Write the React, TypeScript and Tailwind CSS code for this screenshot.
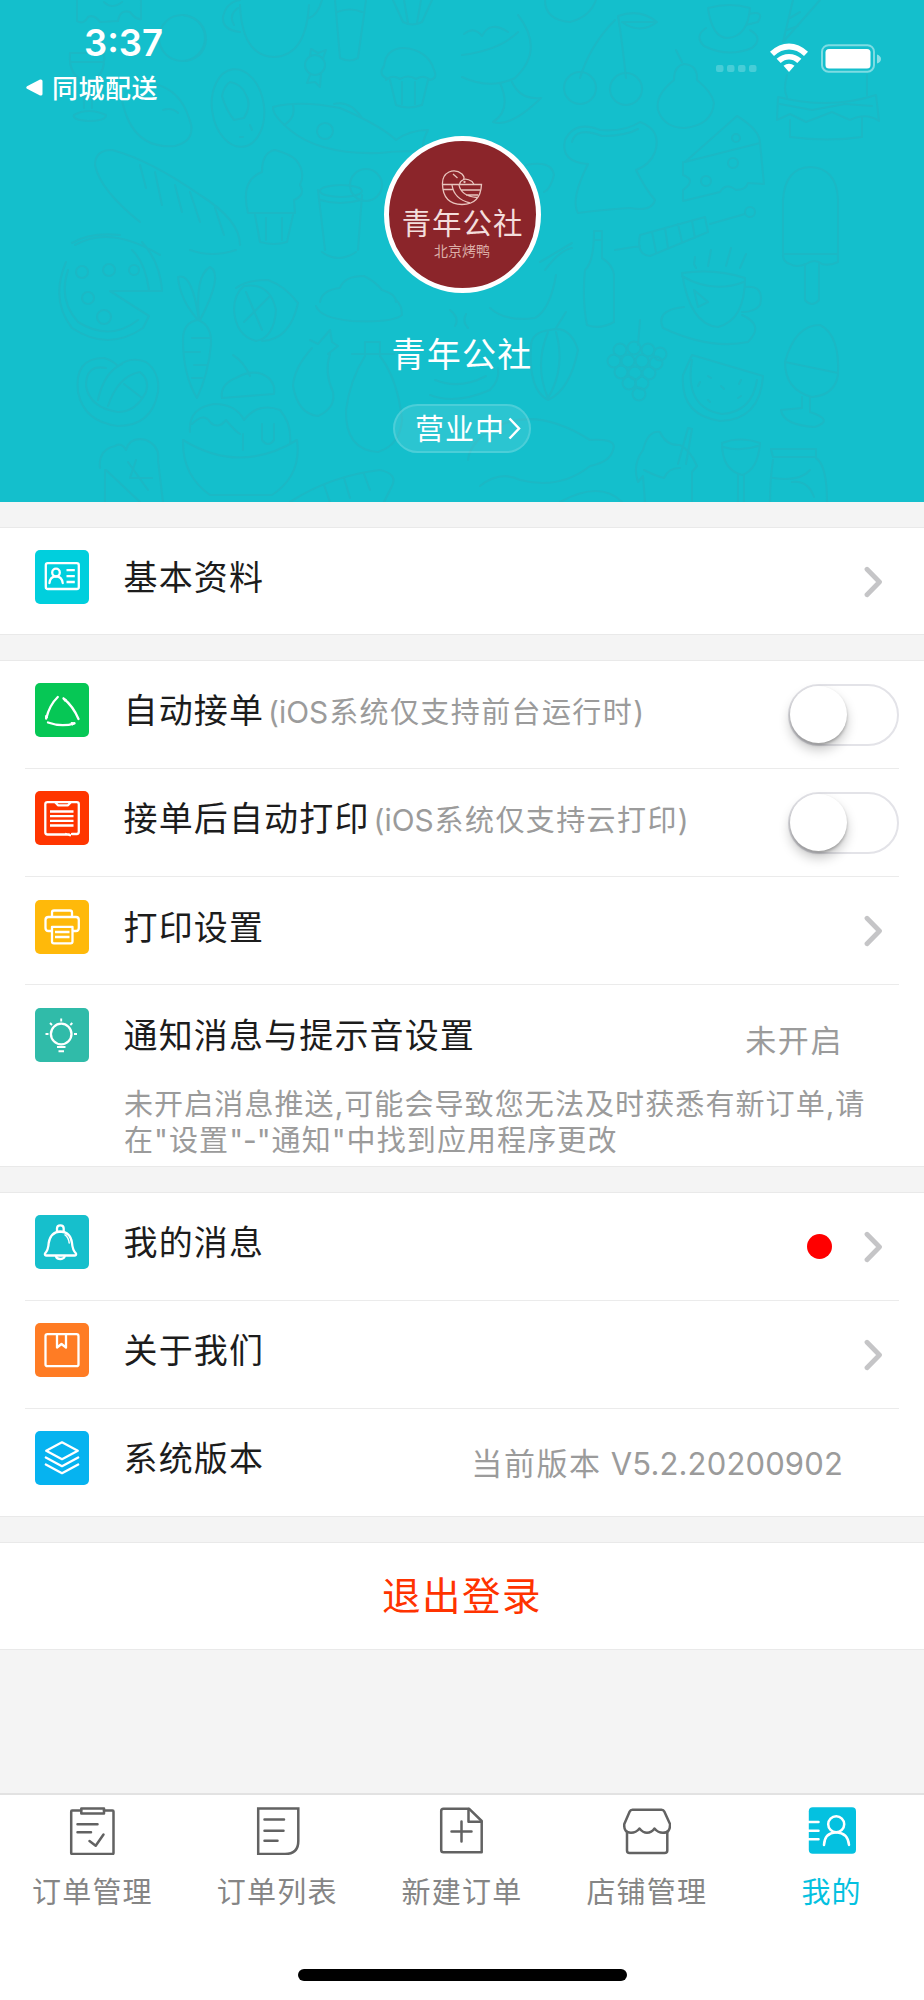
import React from 'react';
import { clsx } from 'clsx';

// Latin runs use Inter, slightly larger and without the CJK tracking
const Mixed: React.FC<{ text: string }> = ({ text }) => (
  <>
    {text.split(/([\x20-\x7e]+)/).map((part, i) =>
      i % 2 === 1 ? (
        <span key={i} className="mr-[.03em] font-['Inter',sans-serif] text-[1.03em] tracking-normal">{part}</span>
      ) : (
        part
      )
    )}
  </>
);

const Doodles = () => (
  <svg
    className="absolute inset-0"
    width="924"
    height="502"
    viewBox="0 0 924 502"
    fill="none"
    stroke="#1bb8c5"
    strokeWidth="2.1"
    strokeLinecap="round"
    strokeLinejoin="round"
  >
    {/* top left */}
    <path d="M77 0V21Q84 25 88 17Q94 14 100 22L118 21Q120 9 130 12Q136 20 141 19V0M104 2Q112 10 122 2" />
    <circle cx="182" cy="38" r="23" />
    <path d="M184 15Q206 20 206 40Q204 58 186 61" />
    <path d="M240 5Q242 56 274 57Q306 56 309 5M240 32Q222 30 223 17Q226 2 240 0M234 25Q228 15 238 8M309 18Q318 15 322 0" />
    <path d="M335 0L340 58Q350 63 358 58L366 0M337 12Q350 7 362 12" />
    <path d="M393 0L403 22Q412 27 422 22L432 0M404 0L408 23M421 0L417 23" />
    <path d="M70 53Q68 78 88 82Q106 78 104 53ZM71 62H103M84 82V108M92 82V108M74 115Q88 107 106 115Q106 121 88 121Q72 120 74 115" />
    <path d="M121 95Q130 150 175 146Q198 140 189 118Q180 90 155 84M163 110Q172 107 178 113" />
    <ellipse cx="238" cy="108" rx="26" ry="39" transform="rotate(-8 238 108)" />
    <path d="M230 82Q242 84 246 95Q252 105 244 118L234 120Q226 110 222 96Q224 86 230 82M250 125L252 130M240 137H243" />
    <circle cx="315" cy="65" r="10" />
    <path d="M310 56L311 49L318 53L326 50L323 58M310 75L307 83L315 82L320 87L321 74" />
    <path d="M386 78Q378 74 384 66Q386 48 404 48Q428 50 434 70Q438 78 430 80M386 80Q392 74 400 79Q408 74 416 79Q424 74 430 80M390 80L396 105Q408 110 422 105L428 80M402 82V104M415 82V104" />
    <path d="M273 107Q300 100 340 108Q380 125 396 140Q410 130 428 130Q420 145 425 152Q400 150 380 153Q320 155 290 130Q272 115 273 107ZM293 105Q296 118 284 125M334 104Q350 100 362 118" />
    <circle cx="325" cy="131" r="8" />
    <path d="M95 165Q95 150 112 150Q150 160 200 195Q240 220 240 245M95 165Q100 190 140 222M140 165L146 188M155 172L162 205M175 185L182 212M190 192L200 222M215 208L224 235" />
    <path d="M248 213Q240 180 262 172Q262 152 275 150Q290 154 296 160Q306 172 300 185Q306 195 294 200L295 213ZM255 215L260 242Q274 246 287 242L293 215M266 218V240M282 218V240" />
    <path d="M318 190L325 250M362 195L358 250M320 200Q340 206 361 200" />
    <ellipse cx="341" cy="191" rx="21" ry="6" />
    <circle cx="366" cy="185" r="16" />
    {/* top right */}
    <path d="M518 15Q545 50 515 78Q490 90 462 77M462 55Q500 50 518 32M464 34Q474 26 482 36Q490 20 508 32M500 83Q512 110 493 122Q510 128 541 98Q520 100 512 82" />
    <path d="M545 0Q545 20 570 22Q590 17 596 0" />
    <circle cx="580" cy="88" r="16" />
    <circle cx="626" cy="89" r="16" />
    <path d="M580 78Q590 45 615 20M626 78Q622 40 618 16Q640 8 657 22Q640 35 622 22H655" />
    <path d="M684 64Q674 66 674 80Q655 95 658 110Q664 128 685 128Q712 125 714 103Q712 92 697 80Q698 65 684 64ZM682 62L676 50" />
    <path d="M708 8Q730 2 750 8Q748 36 728 38Q712 38 708 8ZM749 14Q765 10 758 22L746 25M706 28Q694 36 704 46Q728 58 752 48Q764 38 750 30" />
    <path d="M793 0L783 42L820 0M790 18L800 12M787 30L798 26" />
    <path d="M787 75Q783 90 787 97M867 75V95M778 97Q830 110 876 95L879 121Q866 112 850 120L832 112L806 122L790 114L777 120ZM790 120V137Q828 142 862 137V118M780 104L812 110L845 104L872 106" />
    <path d="M588 164Q560 162 565 140Q575 120 600 130Q625 132 640 122Q662 130 655 152Q650 165 636 170Q646 190 655 200Q652 212 630 208Q600 210 578 213Q570 200 588 164ZM572 142Q576 126 602 136Q626 136 638 129" />
    <path d="M685 162L737 116Q760 130 760 143ZM683 162V175Q697 180 683 190V201L720 192Q726 182 736 190Q746 190 748 183L764 184L760 143" />
    <circle cx="706" cy="181" r="5" />
    <circle cx="733" cy="163" r="5" />
    <circle cx="736" cy="138" r="4" />
    <path d="M783 255V200Q785 168 810 167Q837 168 838 200V262Q830 266 822 264Q815 258 806 264Q796 268 790 264Q783 262 783 255ZM805 264V300Q812 308 819 300V264M785 254H838" />
    <path d="M615 250L640 246M710 224L745 214M640 235L705 217L708 232L650 256Q636 255 640 235ZM652 232L656 252M665 228L668 248M678 224L682 242M692 221L695 238" />
    <circle cx="750" cy="212" r="5" />
    {/* middle right */}
    <path d="M594 231H602V258Q613 265 614 275V322Q600 330 587 325Q582 300 585 270Q594 262 594 231ZM594 240H602" />
    <path d="M682 273Q715 268 745 278Q745 320 718 327Q690 325 682 273ZM682 276Q712 294 744 282M745 287Q765 285 760 305Q755 312 742 312M684 307Q655 310 663 328Q710 350 748 342Q765 325 742 315M695 257L694 264L696 268M711 250L708 266M731 248L726 266M746 254L740 268M694 290L708 302L698 307Z" />
    <path d="M640 320L638 345" />
    {[
      [620, 350], [634, 348], [648, 350], [660, 354], [614, 361], [628, 361], [642, 361], [656, 363],
      [621, 372], [635, 373], [649, 373], [629, 383], [642, 383], [639, 394],
    ].map(([cx, cy]) => (
      <circle key={`${cx}-${cy}`} cx={cx} cy={cy} r="6.5" />
    ))}
    <path d="M692 355L763 376Q760 420 720 421Q680 415 683 375ZM692 360Q684 408 722 414Q752 412 757 380M708 376L711 378M698 386L700 382M721 386L724 389M741 380L739 384M738 398L741 396M708 400L710 402" />
    <path d="M785 362Q795 325 820 325Q840 335 838 375Q835 395 812 397Q785 390 785 362L838 373M802 397V408L781 410Q783 425 815 427Q835 420 810 412V397" />
    <path d="M722 443Q740 436 760 443Q758 470 742 475Q722 470 722 443ZM723 447Q740 452 758 446M738 475V502M744 475V502" />
    <path d="M771 449H816V457H773ZM773 460Q770 480 770 502M816 458Q827 465 827 502M773 478Q800 482 810 470M792 482Q808 480 814 497" />
    <path d="M645 502L643 476L638 482Q632 465 643 450Q648 430 660 432Q666 446 680 445Q690 450 697 466L692 472V502M644 470Q656 476 664 478Q668 468 680 468M678 464L688 428L692 429L686 464" />
    {/* centre */}
    <path d="M365 342V356Q350 380 346 410Q345 450 378 452Q400 445 402 420Q398 380 380 356V342ZM352 354H394" />
    <path d="M316 306Q320 318 352 321Q392 323 402 315Q402 305 396 300M320 302Q322 290 340 288Q344 276 364 276Q376 282 382 290Q396 294 396 302" />
    <path d="M531 345Q528 390 548 400Q570 390 578 350Q570 325 550 330Q532 332 531 345ZM548 332Q534 366 548 398Q566 368 556 332M556 328L566 312" />
    <path d="M468 460Q470 440 500 425Q540 408 590 440Q618 438 613 450Q610 462 590 466Q560 490 520 480M480 486Q500 470 520 480" />
    <path d="M540 262L572 243M545 270Q560 250 572 248M556 275Q550 310 535 318Q505 322 490 308" />
    <path d="M430 395Q455 405 490 390Q500 380 498 368M435 380Q460 390 486 376M450 310Q460 318 455 326M466 314Q462 322 468 328" />
    {/* bottom left */}
    <path d="M75 245Q110 225 160 255M149 290Q145 262 132 250M162 290Q160 262 142 242M66 262Q50 300 72 328Q108 352 143 328L149 316L110 291H162M68 270Q58 300 78 322Q110 342 138 320" />
    <circle cx="82" cy="272" r="6" />
    <circle cx="109" cy="270" r="6" />
    <circle cx="88" cy="298" r="6" />
    <circle cx="104" cy="317" r="7" />
    <circle cx="134" cy="270" r="5" />
    <path d="M183 340Q183 322 198 320Q212 325 211 345Q208 375 197 398Q183 375 183 340ZM198 320Q180 300 178 277Q192 272 199 320Q195 275 210 267Q224 274 200 320M192 338H210M184 352H200M194 365H208M192 378H202" />
    <path d="M236 288Q246 280 268 280Q285 286 298 303Q290 340 262 341M244 286Q270 282 276 310Q274 338 256 341Q236 336 234 310Q234 294 244 286ZM246 292L262 330M270 296L244 322" />
    <path d="M78 392Q74 358 104 358Q112 360 118 366Q130 356 146 362Q160 372 158 392Q152 426 118 426Q84 422 78 392ZM86 386Q86 364 106 368M98 400Q104 372 122 364M108 406Q118 376 140 372Q150 380 146 392Q136 412 118 412Q90 408 86 386M124 384L142 398" />
    <path d="M183 440Q240 475 297 440Q302 475 272 495H210Q182 475 183 440ZM190 432Q188 408 214 404Q236 404 244 420Q258 402 280 410Q292 424 290 444M192 424Q204 412 210 422Q218 430 226 420Q234 430 240 434M243 434V450M262 424V440Q268 448 274 440V424M222 398Q220 384 236 378Q250 370 262 374Q276 380 274 394L222 398M250 376Q244 362 233 355" />
    <path d="M310 340L318 344L330 330L332 342L338 346L328 354M312 348Q294 368 293 386Q298 414 318 416Q336 408 333 392Q324 372 330 354" />
    <path d="M105 470V502M100 468Q98 450 115 446Q122 442 126 450Q130 436 146 440Q160 446 158 460L163 502M106 470L140 502M128 462L148 490M136 460L130 478L152 478" />
    <path d="M290 502Q330 476 380 470Q398 474 392 486L384 502M324 485L330 502M344 478L350 498M364 474L370 490" />
    <path d="M72 243Q90 232 120 235M190 250Q212 258 236 250M322 252Q338 264 356 252" />
    <path d="M560 502Q600 480 622 502M526 165Q552 160 554 175Q550 190 544 192" />
  </svg>
);

const DuckLogo = () => (
  <svg width="42" height="37" viewBox="0 0 42 37" fill="none" stroke="#e8c4bd" strokeWidth="1.3">
    <path d="M1.500 15.500H40.500Q39.500 35.500 21 35.500Q2 35 1.500 15.500Q1 6.500 8 3Q15 0 21 5Q24.500 9 22 11Q19 12 18.500 15.500" />
    <path d="M22 10.500Q26 9 31 12.500L33 15.500M12 5L16.500 9M2 20.500H12M11 16Q13 30 29 34M20 21H39.500M18 16Q20 27 36 28.500M25 26H37" />
    <circle cx="23.500" cy="13" r=".5" />
  </svg>
);

const StatusIcons = () => (
  <svg width="166" height="32" viewBox="0 0 166 32" fill="#fff">
    <g fillOpacity=".22">
      <rect x="0" y="23" width="7.500" height="7" rx="2" />
      <rect x="11" y="23" width="7.500" height="7" rx="2" />
      <rect x="22" y="23" width="7.500" height="7" rx="2" />
      <rect x="33" y="23" width="7.500" height="7" rx="2" />
    </g>
    <path d="M54 9.800Q63 1.600 73 1.600Q83 1.600 92 9.800L88 14Q81 7.600 73 7.600Q65 7.600 58 14Z" />
    <path d="M60.600 16.800Q66 12 73 12Q80 12 85.400 16.800L81.300 21Q77.500 17.600 73 17.600Q68.500 17.600 64.700 21Z" />
    <path d="M67.500 23.800Q70 21.700 73 21.700Q76 21.700 78.500 23.800L73 30Z" />
    <rect x="106" y="3.200" width="52" height="26.500" rx="6.500" fill="none" stroke="#fff" strokeOpacity=".45" strokeWidth="2" />
    <rect x="109.500" y="7" width="45" height="19.500" rx="3.500" />
    <path d="M161 12.500Q165 14 165 17Q165 20 161 21.500Z" fillOpacity=".5" />
  </svg>
);

const Icon: React.FC<{ className?: string; children: React.ReactNode }> = ({ className, children }) => (
  <div className={clsx('h-[54px] w-[54px] shrink-0 rounded-[5px]', className)}>
    <svg width="54" height="54" viewBox="0 0 54 54" fill="none" stroke="#fff" strokeWidth="2.3" strokeLinecap="round" strokeLinejoin="round">
      {children}
    </svg>
  </div>
);

const ProfileIcon = () => (
  <Icon className="bg-[#00cfdd]">
    <rect x="10.800" y="13.200" width="33" height="25.800" rx="2" />
    <circle cx="21" cy="22.500" r="3.800" />
    <path d="M14.500 33Q15 26.500 21 26.300Q27 26.500 27.700 33" />
    <path d="M31.500 20.200H39.800M31.500 26.200H39.800M31.500 32H39.800" strokeLinecap="butt" />
  </Icon>
);

const CycleIcon = () => (
  <Icon className="bg-[#06c755]">
    <path d="M22.800 14Q14.500 22 11.200 35.500M28.500 15.500Q38 23 43.500 36M13 39.500Q27 44.500 39.500 40.300" />
    <path d="M10.500 33L10.800 36L12.500 34.500ZM28.500 15L31.500 16.800L30 18ZM36.500 39.500L40 40L37.500 42Z" strokeWidth="1" fill="#fff" />
  </Icon>
);

const ReceiptIcon = () => (
  <Icon className="bg-[#ff3500]">
    <path d="M34 43.500H12.500Q10.300 43.500 10.300 41.300V13.300Q10.300 11.200 12.500 11.200H41.800Q43.800 11.200 43.800 13.300V40.800Q43.800 43 41.800 43H37M31 43L35 44.200" />
    <path d="M20.500 11.500L23 14.300H33L35.500 11.500" />
    <path d="M15 20.500H38.500M15 25.200H38.500M15 29.800H38.500M15 34.500H38.500" strokeLinecap="butt" />
  </Icon>
);

const PrinterIcon = () => (
  <Icon className="bg-[#ffb90a]">
    <path d="M17 16.500V12.500Q17 10.500 19 10.500H35Q37 10.500 37 12.500V16.500M16.500 31H13.500Q10.500 31 10.500 28V20Q10.500 17 13.500 17H41Q43.800 17 43.800 20V28Q43.800 31 41 31H38" />
    <path d="M17 26.800H37.500V41.500Q37.500 43.300 35.700 43.300H18.800Q17 43.300 17 41.500Z" />
    <path d="M20 32H34.500M20 37H34.500" strokeLinecap="butt" />
  </Icon>
);

const BulbIcon = () => (
  <Icon className="bg-[#30bba9]">
    <circle cx="26.200" cy="26" r="10.300" />
    <path d="M26.200 10.500V13.500M10.500 26H13.500M39 26H42M15 15L17 17M37.300 15L35.300 17M22 39H30.500M23.500 43.300H29" strokeWidth="1.900" strokeLinecap="butt" />
  </Icon>
);

const BellIcon = () => (
  <Icon className="bg-[#16bfcc]">
    <path d="M22 16V13.500Q22 10.300 25.300 10.300Q28.700 10.300 28.700 13.500V16" />
    <path d="M25.300 16.500Q35.500 17 37 28Q37.500 35 41 38.500Q41.500 40.500 39.500 40.500H11.500Q9.500 40.500 10 38.500Q13.300 35 13.700 28Q15.500 17 25.300 16.500Z" />
    <path d="M21 41.500Q22 44 25.300 44Q28.500 44 29.700 41.500" />
    <path d="M30 19.800Q33.500 22 34.200 28" strokeWidth="1.500" />
  </Icon>
);

const BookIcon = () => (
  <Icon className="bg-[#ff7c24]">
    <rect x="10.500" y="11.200" width="33" height="32" rx="2" />
    <path d="M22 11.500V24.500L26.500 21L31 24.500V11.500" />
  </Icon>
);

const LayersIcon = () => (
  <Icon className="bg-[#06b3f0]">
    <path d="M27 11.300L42.800 19.800L27 28.200L11.200 19.800Z" />
    <path d="M10.800 26.500L27 35.200L43.200 26.500M10.800 33.500L27 42.200L43.200 33.500" />
  </Icon>
);

const Chevron = () => (
  <svg width="20" height="32" viewBox="0 0 20 32" fill="none" stroke="#c5c5c7" strokeWidth="4.800" strokeLinecap="round" strokeLinejoin="round">
    <path d="M4 3.200L16.500 16L4 28.800" />
  </svg>
);

const Toggle = () => (
  <div className="h-[62px] w-[111px] rounded-full border-2 border-[#e3e3e8] bg-white">
    <div className="h-[57px] w-[57px] rounded-full bg-white shadow-[0_7px_12px_rgba(0,0,0,0.22),0_2px_3px_rgba(0,0,0,0.25)]" />
  </div>
);

interface RowProps {
  icon: React.ReactNode;
  title: string;
  hint?: string;
  value?: React.ReactNode;
  dot?: boolean;
  control?: 'chevron' | 'toggle';
  last?: boolean;
  low?: boolean;
}

const Row: React.FC<RowProps> = ({ icon, title, hint, value, dot, control, last, low }) => (
  <div className={clsx('mx-[25px] flex justify-between', last ? 'h-[106px]' : 'h-[108px] border-b border-[#ebebeb]')}>
    <div className={clsx('flex items-start pl-[10px]', low ? 'pt-[23px]' : 'pt-[22px]')}>
      {icon}
      <div className="ml-[34.500px] flex items-baseline leading-[51px] whitespace-nowrap">
        <span className="text-[34px] tracking-[1.150px] text-[#1c1c1c]">{title}</span>
        {hint && (
          <span className="ml-1 text-[29px] tracking-[1.400px] text-[#9b9b9b]"><Mixed text={hint} /></span>
        )}
      </div>
    </div>
    <div className="flex h-[107px] items-center">
      {value && (
        <div className="mr-[56px] text-[31px] leading-[50px] tracking-[1.600px] whitespace-nowrap text-[#9b9b9b]">{value}</div>
      )}
      {dot && <span className="mr-[31px] h-[25px] w-[25px] rounded-full bg-[#ff0000]" />}
      {control === 'chevron' && <div className="mr-4"><Chevron /></div>}
      {control === 'toggle' && <Toggle />}
    </div>
  </div>
);

const tabs = [
  {
    label: '订单管理',
    icon: (
      <>
        <path d="M13 3.500H4Q3.200 3.500 3.200 4.500V46Q3.200 47 4.200 47H44.500Q45.500 47 45.500 46V4.500Q45.500 3.500 44.500 3.500H36" />
        <path d="M13.300 1.500H36V6.500H13.300Z" />
        <path d="M9.500 17.300H29.500M9.500 25.300H23M21.500 34L27.700 38.700L35.500 27.500" />
      </>
    ),
  },
  {
    label: '订单列表',
    icon: (
      <>
        <path d="M5.200 1.500H45.300V34Q45.300 47 32 47H5.200Z" strokeLinejoin="miter" />
        <path d="M11.500 12.500H31M11.500 23.700H30.500M11.500 33.800H24.500" />
      </>
    ),
  },
  {
    label: '新建订单',
    icon: (
      <>
        <path d="M43.700 45.300H5.500Q3.200 45.300 3.200 43V4Q3.200 1.700 5.500 1.700H31L43.700 14V45.300Z" />
        <path d="M30.500 2V14.700H43.500M13.500 24.500H33.500M23.500 14.500V34.500" />
      </>
    ),
  },
  {
    label: '店铺管理',
    icon: (
      <>
        <path d="M9.500 2.700H38.500Q40.500 2.700 41.300 4.500L47 17Q47.500 25.800 40 25.800Q35 25.800 31.500 21.500Q28.500 25.800 24 25.800Q20 25.800 16.500 21.500Q13 25.800 8 25.800Q.5 25.800 1.300 17L6.700 4.500Q7.500 2.700 9.500 2.700Z" />
        <path d="M4 25V43.500Q4 46 6.500 46H41.500Q44.300 46 44.300 43.500V25" />
      </>
    ),
  },
  {
    label: '我的',
    active: true,
    icon: (
      <>
        <rect x=".8" y=".3" width="47.200" height="46.500" rx="4" fill="#04c1e0" stroke="none" />
        <g stroke="#fff">
          <circle cx="28.200" cy="17.300" r="8" />
          <path d="M16 38Q16.500 26 28.200 25.300Q40 26 41 38M0 15H10.500M0 23.700H10.500M0 32.300H10.500" />
        </g>
      </>
    ),
  },
];

export default function App() {
  return (
    <div className="flex h-[2000px] w-[924px] flex-col overflow-hidden bg-[#f4f4f4] font-['Noto_Sans_CJK_SC',sans-serif]">
      <header className="relative h-[502px] shrink-0 bg-[#14bfcc] text-white">
        <Doodles />
        <div className="relative flex flex-col items-center">
          <div className="flex h-[136px] w-full justify-between">
            <div className="pt-6 pl-[26px]">
              <div className="pl-[58px] font-['Inter',sans-serif] text-[36.500px] leading-[38px] font-semibold">3:37</div>
              <div className="mt-[9px] flex h-[33px] items-center">
                <svg width="17" height="17" viewBox="0 0 17 17" fill="#fff">
                  <path d="M1 7.200L14 .6Q16.500 0 16.500 2V15Q16.500 17 14 16.400L1 9.800Q-.5 8.500 1 7.200Z" />
                </svg>
                <span className="ml-[9px] pb-[2px] text-[26px] leading-[30px] font-medium tracking-[.5px]">同城配送</span>
              </div>
            </div>
            <div className="pt-[42px] pr-[42px]"><StatusIcons /></div>
          </div>
          <div className="flex h-[157px] w-[157px] flex-col items-center rounded-full border-[5px] border-white bg-[#8b252a] pt-[28px]">
            <DuckLogo />
            <div className="-mt-[4px] pl-[1px] text-[29.500px] leading-[38px] tracking-[.9px] whitespace-nowrap text-[#f3dedc]">青年公社</div>
            <div className="text-[14px] leading-[20px] text-[#dcaea8]">北京烤鸭</div>
          </div>
          <div className="mt-[36px] text-[34px] leading-[48px] tracking-[1.200px]">青年公社</div>
          <div className="mt-[27px] flex h-[49px] w-[138px] items-center rounded-full border-2 border-white/15 bg-white/10 pl-5">
            <span className="pb-[3px] text-[29px] leading-[40px] tracking-[1px]">营业中</span>
            <svg className="ml-[3px]" width="13" height="23" viewBox="0 0 13 23" fill="none" stroke="#fff" strokeWidth="2.500">
              <path d="M1.500 1.500L11 11.500L1.500 21.500" />
            </svg>
          </div>
        </div>
      </header>

      <section className="mt-[25px] shrink-0 border-y border-[#e9e9e9] bg-white">
        <Row icon={<ProfileIcon />} title="基本资料" control="chevron" last />
      </section>

      <section className="mt-[25px] h-[507px] shrink-0 border-y border-[#e9e9e9] bg-white">
        <Row icon={<CycleIcon />} title="自动接单" hint="(iOS系统仅支持前台运行时)" control="toggle" />
        <Row icon={<ReceiptIcon />} title="接单后自动打印" hint="(iOS系统仅支持云打印)" control="toggle" />
        <Row icon={<PrinterIcon />} title="打印设置" control="chevron" low />
        <Row icon={<BulbIcon />} title="通知消息与提示音设置" value="未开启" last low />
        <p className="-mt-[6px] ml-[124px] text-[29px] leading-[34px] tracking-[1.100px] whitespace-nowrap text-[#9b9b9b]">
          <Mixed text="未开启消息推送,可能会导致您无法及时获悉有新订单,请" />
          <br />
          <Mixed text={'在"设置"-"通知"中找到应用程序更改'} />
        </p>
      </section>

      <section className="mt-[25px] shrink-0 border-y border-[#e9e9e9] bg-white pb-px">
        <Row icon={<BellIcon />} title="我的消息" dot control="chevron" />
        <Row icon={<BookIcon />} title="关于我们" control="chevron" />
        <Row
          icon={<LayersIcon />}
          title="系统版本"
          value={
            <>
              当前版本
              <span className="ml-[9px] font-['Inter',sans-serif] tracking-[.150px]">V5.2.20200902</span>
            </>
          }
          last
        />
      </section>

      <button className="mt-[25px] h-[108px] w-full shrink-0 border-y border-[#e9e9e9] bg-white pb-[4px] text-[38.500px] tracking-[1.500px] text-[#ff3300]">
        退出登录
      </button>

      <nav className="mt-auto flex h-[207px] shrink-0 flex-col items-center border-t-2 border-[#e2e2e2] bg-white">
        <div className="grid w-full grid-cols-5 pt-[12px]">
          {tabs.map((tab) => (
            <div key={tab.label} className="flex flex-col items-center">
              <svg width="48" height="48" viewBox="0 0 48 48" fill="none" stroke="#626262" strokeWidth="2.500" strokeLinecap="round" strokeLinejoin="round">
                {tab.icon}
              </svg>
              <span className={clsx('mt-[15px] text-[29px] leading-[40px] tracking-[1.200px]', tab.active ? 'text-[#04c1e0]' : 'text-[#858585]')}>
                {tab.label}
              </span>
            </div>
          ))}
        </div>
        <div className="mt-[59px] h-3 w-[329px] shrink-0 rounded-full bg-black" />
      </nav>
    </div>
  );
}
